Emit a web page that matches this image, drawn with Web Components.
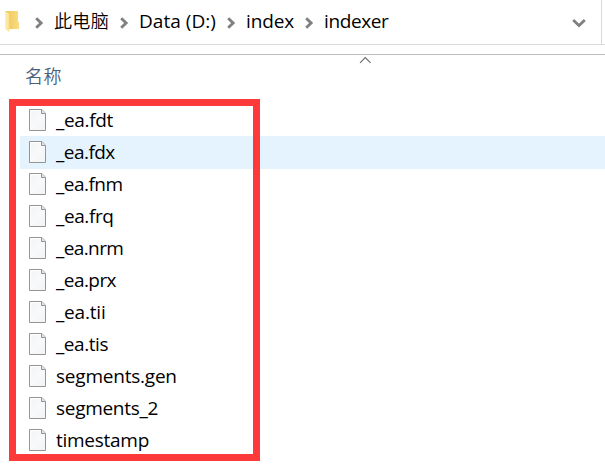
<!DOCTYPE html>
<html lang="zh-CN">
<head>
<meta charset="utf-8">
<title>indexer</title>
<style>
html,body{margin:0;width:605px;height:465px;overflow:hidden;background:#fff}
body{font:19px/32px "Open Sans","Noto Sans CJK SC",sans-serif;color:#000}
</style>
</head>
<body>
<file-window></file-window>
<script>
const define = (name, html, setup) => customElements.define(name, class extends HTMLElement {
  connectedCallback() {
    if (this.shadowRoot) return;
    this.attachShadow({mode: 'open'}).innerHTML = html;
    if (setup) setup(this, this.shadowRoot);
  }
});

// A label whose letter spacing is adjusted to fill the advance width "w".
define('fit-label', `<style>:host{display:block;white-space:pre;flex:none}:host([cjk]){font-family:"Noto Sans CJK SC",sans-serif;font-size:18px;line-height:30px;font-weight:350}span{display:inline-block}</style><span><slot></slot></span>`, (el, root) => {
  const s = root.querySelector('span');
  const n = [...el.textContent].length;
  const w = +el.getAttribute('w');
  s.style.letterSpacing = (w - s.getBoundingClientRect().width) / n + 'px';
  el.style.width = w + 'px';
});

define('folder-icon', `<style>:host{display:block;width:14px;height:22px}svg{display:block}</style>
<svg width="14" height="22" viewBox="0 0 14 22"><defs><linearGradient id="b"><stop offset="0" stop-color="#edc65b"/><stop offset="1" stop-color="#fbdc80"/></linearGradient><linearGradient id="f"><stop offset="0" stop-color="#fff0b5"/><stop offset="1" stop-color="#fbe08a"/></linearGradient></defs>
<path d="M0 1H13V12H14V19H4V20L0 18Z" fill="url(#b)"/><path d="M0 1L4.3 4V22L0 19Z" fill="url(#f)"/></svg>`);

define('crumb-chevron', `<style>:host{display:block;width:9px;height:12px;flex:none}svg{display:block}</style>
<svg width="9" height="12" viewBox="0 0 9 12"><path d="M1.2 1.3L6.1 6L1.2 10.7" fill="none" stroke="#808080" stroke-width="2.9"/></svg>`);

define('file-icon', `<style>:host{display:block;width:18px;height:23px;flex:none}svg{display:block}</style>
<svg width="18" height="23" viewBox="0 0 18 23"><defs><linearGradient id="p" x2="1" y2="1"><stop offset="0" stop-color="#f2f4f4"/><stop offset=".5" stop-color="#f7f9fa"/><stop offset="1" stop-color="#f1f4f5"/></linearGradient></defs>
<path d="M.5 .5H12.8L16.5 4.2V21.5H.5Z" fill="url(#p)" stroke="#949494"/><path d="M1.5 20.5V1.5H12" fill="none" stroke="#fff"/><path d="M12.5 .5V4.5H16.5" fill="#e4e5e5" stroke="#949494"/></svg>`);

define('address-bar', `<style>
:host{display:grid;grid-template-columns:601px 1fr;height:44px;border-bottom:1px solid #d9d9d9}
.path{display:flex;align-items:flex-start;border-right:1px solid #d9d9d9;padding:5px 0 0 5px;width:596px;height:39px}
folder-icon{margin:5px 16px 0 0}crumb-chevron{margin-top:12px}
fit-label{margin:0 11px 0 10px}
.drop{margin:13px 0 0 auto;padding-right:15px}svg{display:block}
</style><div class="path"><folder-icon></folder-icon>
<crumb-chevron></crumb-chevron><fit-label w="55" cjk>此电脑</fit-label>
<crumb-chevron></crumb-chevron><fit-label w="77">Data (D:)</fit-label>
<crumb-chevron></crumb-chevron><fit-label w="48">index</fit-label>
<crumb-chevron></crumb-chevron><fit-label w="64.5">indexer</fit-label>
<svg class="drop" width="14" height="11" viewBox="0 0 14 11"><path d="M1.2 2L7 7.5L12.8 2" fill="none" stroke="#808080" stroke-width="2.8"/></svg></div>`);

define('column-header', `<style>
:host{display:grid;grid-template-columns:358px 1fr;height:40px;margin-top:9px;border-top:1px solid #bdbdbd}
.name{padding:5px 0 0 25px;color:#4c607a}
svg{display:block;margin:1px 0 0 1px}
</style><div class="name"><fit-label w="37" cjk>名称</fit-label></div>
<svg width="13" height="8" viewBox="0 0 13 8"><path d="M1 6.8L6.3 1.6L11.6 6.8" fill="none" stroke="#6b6b6b" stroke-width="1.1"/></svg>`);

define('file-row', `<style>
:host{display:flex;align-items:flex-start;height:32px;margin-left:20px;padding-left:9px;box-sizing:border-box}
:host([hovered]){background:#e5f3ff;box-shadow:0 1px #e5f3ff}
file-icon{margin:5px 9px 0 0}
</style><file-icon></file-icon><slot></slot>`);

define('file-window', `<style>
:host{display:block;position:relative;width:605px;height:465px;background:#fff;overflow:hidden}
main{padding-top:9px}
.mark{position:absolute;left:9px;top:99px;width:251px;height:362px;box-sizing:border-box;border:7px solid #fd3939}
</style><address-bar></address-bar><column-header></column-header><main></main><div class="mark"></div>`, (el, root) => {
  const files = [['_ea.fdt',57],['_ea.fdx',58.8],['_ea.fnm',66.5],['_ea.frq',57.5],['_ea.nrm',67.3],['_ea.prx',60],['_ea.tii',49.5],['_ea.tis',52],['segments.gen',120.8],['segments_2',102],['timestamp',93]];
  root.querySelector('main').innerHTML = files.map(([n, w], i) => `<file-row${i === 1 ? ' hovered' : ''}><fit-label w="${w}">${n}</fit-label></file-row>`).join('');
});
</script>
</body>
</html>
